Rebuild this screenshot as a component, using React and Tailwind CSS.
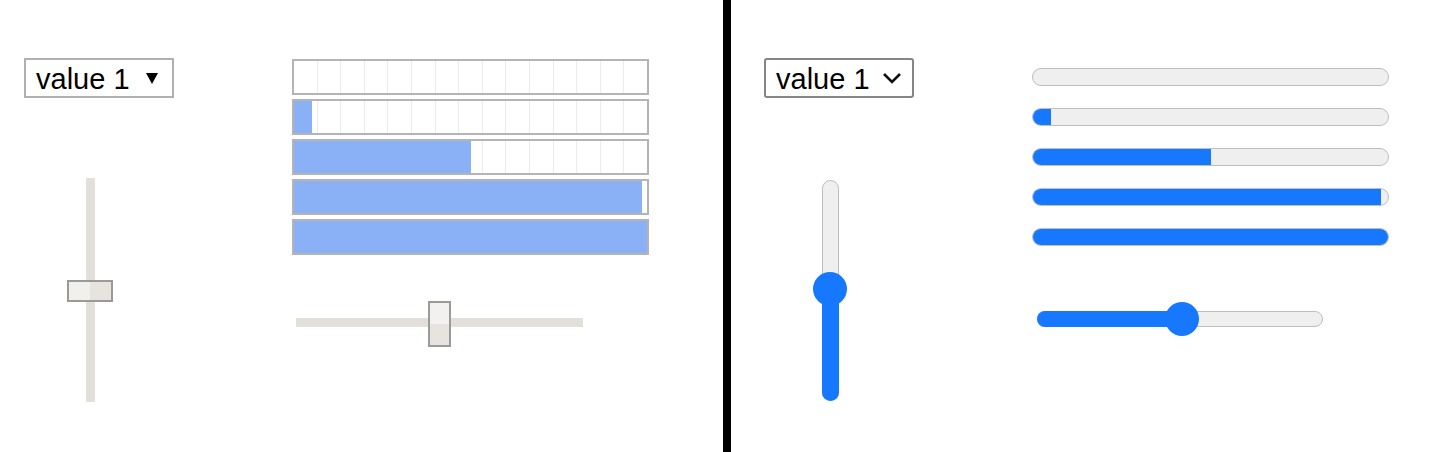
import React from "react";

const CELLS = Array.from({ length: 15 });

const OldProgress = ({ value }) => (
  <div className="relative h-[36px] w-[357px] border-2 border-[#b4b4b4] bg-white overflow-hidden">
    <div className="flex h-full">
      {CELLS.map((_, i) => (
        <div key={i} className="flex-1 h-full border-r border-[#ebebeb] last:border-r-0" />
      ))}
    </div>
    {value > 0 && (
      <div className="absolute left-0 top-0 h-full bg-[#8ab0f6]" style={{ width: `${value}%` }} />
    )}
  </div>
);

const NewProgress = ({ value }) => (
  <div className="relative h-[18px] w-[357px] rounded-full border border-[#bdbdbd] bg-[#efefef] overflow-hidden">
    {value > 0 && (
      <div
        className="absolute -left-px -top-px h-[18px] rounded-l-full bg-[#1677ff]"
        style={{ width: `calc(${value}% + 1px)` }}
      />
    )}
  </div>
);

const Select = ({ modern }) => (
  <div
    className={`flex h-[40px] w-[150px] items-center justify-between border-2 bg-white pl-[10px] pr-[14px] pt-[2px] text-[29px] leading-none text-black ${
      modern ? "rounded-[3px] border-[#858585]" : "border-[#b0b0b0]"
    }`}
    style={{ fontFamily: '"Liberation Sans", Arial, sans-serif' }}
  >
    <span>value 1</span>
    {modern ? (
      <svg width="20" height="12" viewBox="0 0 20 12" className="mr-[-4px] mb-[2px]">
        <path d="M2 2 L10 10 L18 2" fill="none" stroke="#111" strokeWidth="2.6" />
      </svg>
    ) : (
      <svg width="12" height="11" viewBox="0 0 12 11" className="mb-[2px]">
        <path d="M0 0 H12 L6 11 Z" fill="#000" />
      </svg>
    )}
  </div>
);

export default function App() {
  return (
    <div className="flex h-[452px] w-[1440px] bg-white">
      {/* Old-style controls */}
      <div className="flex w-[723px] pl-6 pt-[58px]">
        <div className="flex w-[150px] flex-col">
          <Select />
          <div className="relative ml-[43px] mt-[80px] h-[224px] w-[46px]">
            <div className="mx-auto h-full w-[9px] bg-[#e3dfda]" />
            <div className="absolute left-0 top-[102px] flex h-[22px] w-[46px] border-2 border-[#9c9a97]">
              <div className="h-full flex-1 bg-[#f2f0ed]" />
              <div className="h-full flex-1 bg-[#e7e3df]" />
            </div>
          </div>
        </div>
        <div className="ml-[118px] flex flex-col">
          <div className="flex flex-col gap-[4px] pt-px">
            <OldProgress value={0} />
            <OldProgress value={5} />
            <OldProgress value={50} />
            <OldProgress value={98.5} />
            <OldProgress value={100} />
          </div>
          <div className="relative ml-[4px] mt-[46px] h-[46px] w-[287px]">
            <div className="absolute left-0 top-[17px] h-[9px] w-full bg-[#e3dfda]" />
            <div className="absolute left-[132px] top-0 flex h-[46px] w-[23px] flex-col border-2 border-[#9c9a97]">
              <div className="w-full flex-1 bg-[#f3f1ef]" />
              <div className="w-full flex-1 bg-[#e7e3df]" />
            </div>
          </div>
        </div>
      </div>

      {/* Divider */}
      <div className="h-full w-2 bg-black" />

      {/* Modern controls */}
      <div className="flex flex-1 pl-[33px] pt-[58px]">
        <div className="flex w-[150px] flex-col">
          <Select modern />
          <div className="relative ml-[49px] mt-[82px] h-[221px] w-[34px]">
            <div className="mx-auto h-full w-[17px] rounded-full border border-[#bdbdbd] bg-[#efefef]" />
            <div className="absolute bottom-0 left-[8.5px] h-[112px] w-[17px] rounded-b-full bg-[#1677ff]" />
            <div className="absolute left-0 top-[92px] h-[34px] w-[34px] rounded-full bg-[#1677ff]" />
          </div>
        </div>
        <div className="ml-[118px] flex flex-col">
          <div className="mt-[10px] flex flex-col gap-[22px]">
            <NewProgress value={0} />
            <NewProgress value={5} />
            <NewProgress value={50} />
            <NewProgress value={98} />
            <NewProgress value={100} />
          </div>
          <div className="relative ml-[5px] mt-[56px] h-[34px] w-[286px]">
            <div className="absolute left-0 top-[9px] h-[16px] w-full rounded-full border border-[#bdbdbd] bg-[#efefef]" />
            <div className="absolute left-0 top-[9px] h-[16px] w-[145px] rounded-l-full bg-[#1677ff]" />
            <div className="absolute left-[128px] top-0 h-[34px] w-[34px] rounded-full bg-[#1677ff]" />
          </div>
        </div>
      </div>
    </div>
  );
}
